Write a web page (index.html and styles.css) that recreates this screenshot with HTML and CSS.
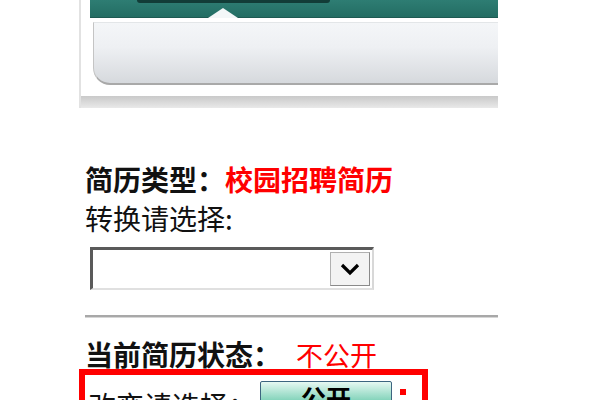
FILE: index.html
```html
<!DOCTYPE html>
<html lang="zh-CN">
<head>
<meta charset="utf-8">
<link rel="stylesheet" href="styles.css">
</head>
<body>
<div class="top">
  <div class="teal"><div class="pill"></div><div class="notch"></div></div>
  <div class="panel"></div>
  <div class="shadow"></div>
</div>
<div class="content">
  <div class="line1"><span class="b">简历类型：</span><span class="red b">校园招聘简历</span></div>
  <div class="line2">转换请选择:</div>
  <div class="select">
    <div class="arrow"><svg width="22" height="14" viewBox="0 0 22 14"><path d="M3 3 L11 11 L19 3" fill="none" stroke="#000" stroke-width="3.2"/></svg></div>
  </div>
  <div class="rule"></div>
  <div class="line3"><span class="b">当前简历状态：</span><span class="red status">不公开</span></div>
</div>
<div class="redbox">
  <div class="row">
    <span class="label">改变请选择：</span>
    <span class="btn">公开</span>
    <span class="dot"></span>
  </div>
</div>
</body>
</html>
```
FILE: styles.css
```css
html, body { margin: 0; padding: 0; background: #fff; }
body { font-family: "Noto Sans CJK SC", "Noto Sans", sans-serif; color: #111; width: 600px; height: 400px; overflow: hidden; }
.top { margin-left: 79px; width: 417px; height: 108px; border-left: 2px solid #e2e2e2; background: #fff; }
.teal { position: relative; margin-left: 9px; height: 17px; background: linear-gradient(#2e7d73, #236d63); border-bottom: 1px solid #1d5a52; }
.pill { position: absolute; left: 47px; top: 0; width: 193px; height: 3px; background: #123c37; border-radius: 0 0 4px 4px; }
.notch { position: absolute; left: 118px; bottom: -1px; width: 0; height: 0; border-left: 15px solid transparent; border-right: 15px solid transparent; border-bottom: 10px solid #f3f7f8; }
.panel { margin: 4px 0 0 12px; height: 60px; background: linear-gradient(#f4f6f8 0%, #eef0f3 40%, #d6d9dd 100%); border-bottom: 2px solid #a9a9a9; border-left: 1px solid #c4c4c4; border-radius: 0 0 0 17px; border-top: 1px solid #e3e6e8; }
.shadow { margin-top: 11px; height: 12px; background: linear-gradient(#c9c9c9, #e9e9e9); }
.content { padding-left: 85px; width: 413px; }
.b { font-weight: bold; }
.red { color: #ff0000; }
.line1 { margin-top: 52px; font-size: 28px; line-height: 39px; white-space: nowrap; }
.line2 { font-size: 28px; line-height: 39px; white-space: nowrap; }
.select { margin: 9px 0 0 5px; width: 277px; height: 36px; border-top: 3px solid #5a5a5a; border-left: 3px solid #5a5a5a; border-right: 2px solid #d8d8d8; border-bottom: 2px solid #e0e0e0; background: #fff; display: flex; justify-content: flex-end; align-items: stretch; padding: 2px 2px 0 0; box-sizing: content-box; }
.arrow { width: 38px; height: 32px; background: #f3f3f3; border: 1px solid #b0b0b0; border-right-color: #8a8a8a; border-bottom-color: #8a8a8a; display: flex; align-items: center; justify-content: center; }
.rule { margin-top: 25px; height: 2px; background: #a8a8a8; border-bottom: 1px solid #d6d6d6; }
.line3 { margin-top: 22px; font-size: 28px; line-height: 28px; white-space: nowrap; }
.status { margin-left: 15px; font-size: 27px; }
.redbox { margin-left: 79px; width: 337px; height: 60px; border: 6px solid #ff0000; border-bottom: none; }
.row { display: flex; align-items: flex-start; padding: 6px 0 0 3px; }
.label { font-size: 28px; line-height: 28px; margin-top: 10px; width: 172px; white-space: nowrap; }
.btn { width: 130px; height: 32px; border: 1px solid #3d6580; border-radius: 2px; background: linear-gradient(#e6f8f2, #7fd2b8 60%, #3aa88a); font-size: 25px; font-weight: bold; line-height: 30px; text-align: center; color: #000; }
.dot { width: 6px; height: 6px; background: #ff0000; margin: 8px 0 0 8px; }
```
